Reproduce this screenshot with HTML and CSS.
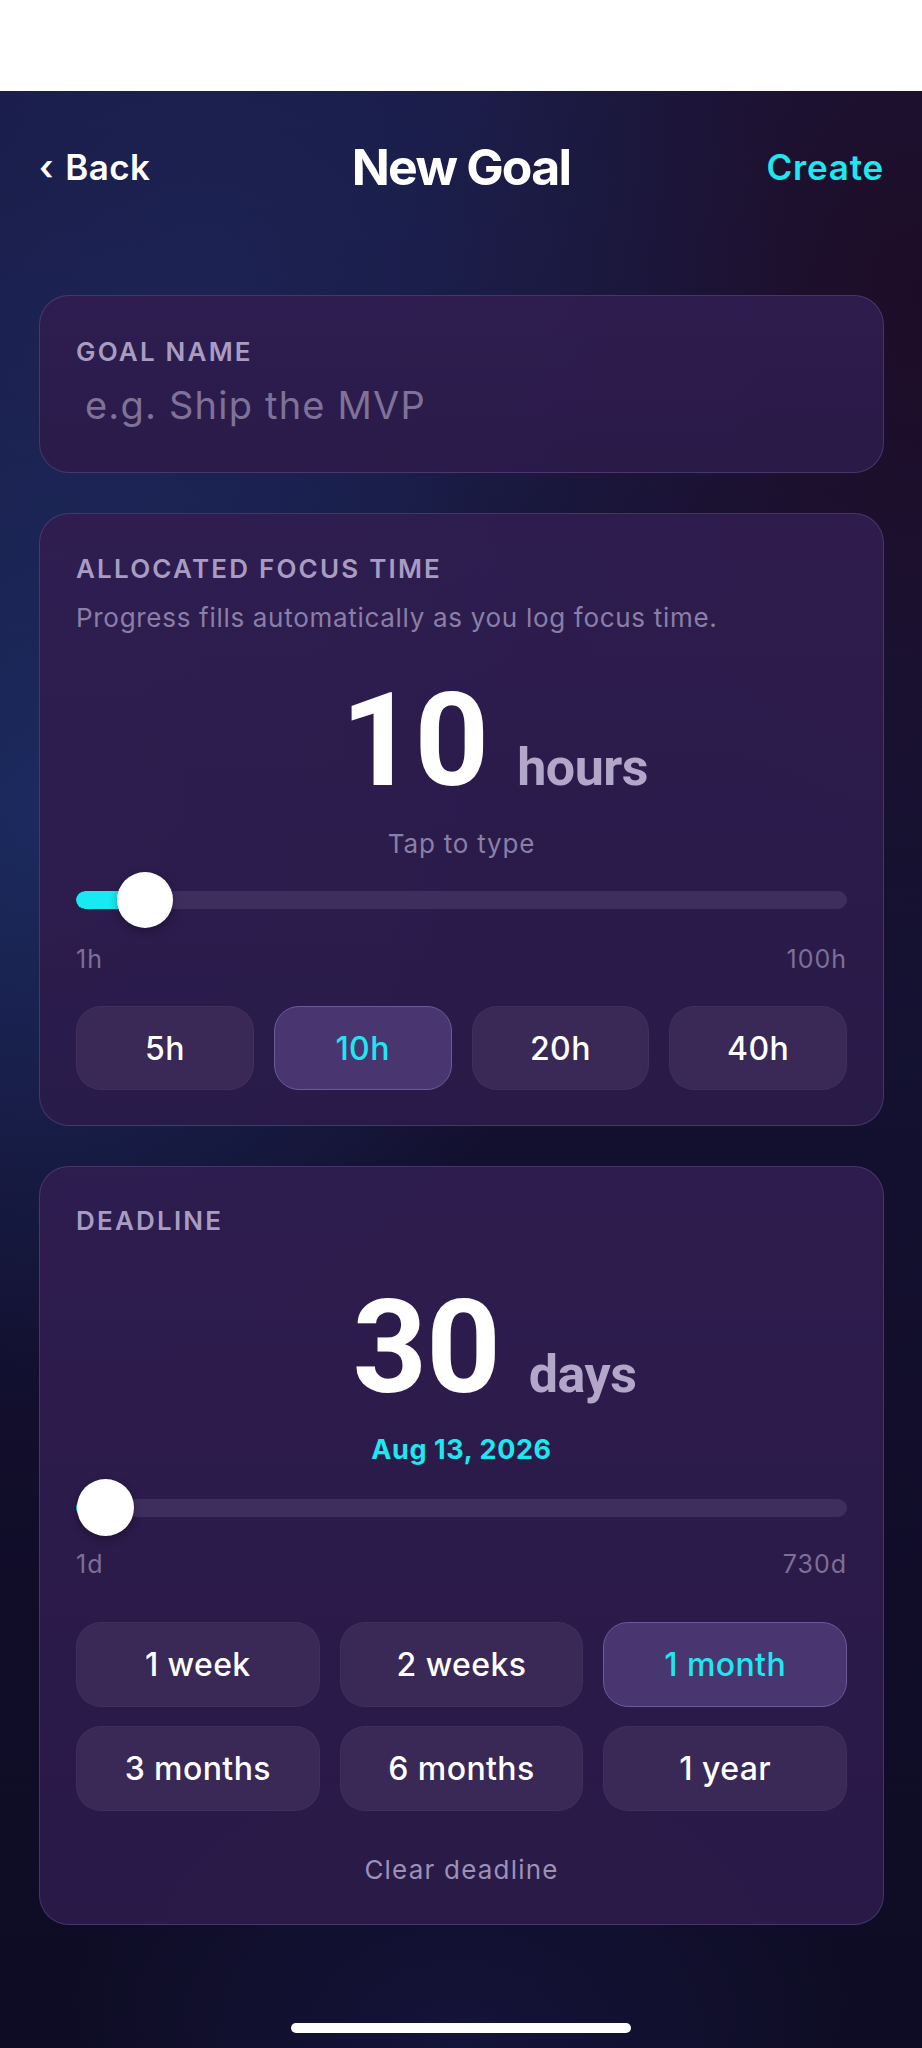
FILE: index.html
```html
<!DOCTYPE html>
<html lang="en">
<head>
<meta charset="utf-8">
<title>New Goal</title>
<link rel="stylesheet" href="styles.css">
</head>
<body>
<div class="statusbar"></div>
<div class="screen">
  <header class="nav">
    <a class="nav-back"><span class="chev">‹</span> Back</a>
    <h1 class="nav-title">New Goal</h1>
    <a class="nav-create">Create</a>
  </header>

  <main class="content">
    <section class="card card-name">
      <div class="label">GOAL NAME</div>
      <div class="placeholder">e.g. Ship the MVP</div>
    </section>

    <section class="card card-focus">
      <div class="label">ALLOCATED FOCUS TIME</div>
      <div class="desc">Progress fills automatically as you log focus time.</div>
      <div class="big big-focus"><span class="big-num">10</span><span class="big-unit">hours</span></div>
      <div class="hint">Tap to type</div>
      <div class="slider slider-focus">
        <div class="track"><div class="fill" style="width:9%"></div></div>
        <div class="thumb" style="left:9%"></div>
      </div>
      <div class="range range-focus"><span>1h</span><span>100h</span></div>
      <div class="chips chips-4">
        <div class="chip">5h</div>
        <div class="chip chip-on">10h</div>
        <div class="chip">20h</div>
        <div class="chip">40h</div>
      </div>
    </section>

    <section class="card card-deadline">
      <div class="label">DEADLINE</div>
      <div class="big big-deadline"><span class="big-num">30</span><span class="big-unit">days</span></div>
      <div class="date">Aug 13, 2026</div>
      <div class="slider slider-deadline">
        <div class="track"><div class="fill" style="width:1%"></div></div>
        <div class="thumb" style="left:3.7%"></div>
      </div>
      <div class="range range-deadline"><span>1d</span><span>730d</span></div>
      <div class="chips chips-3">
        <div class="chip">1 week</div>
        <div class="chip">2 weeks</div>
        <div class="chip chip-on">1 month</div>
        <div class="chip">3 months</div>
        <div class="chip">6 months</div>
        <div class="chip">1 year</div>
      </div>
      <div class="clear">Clear deadline</div>
    </section>
  </main>
  <div class="home-indicator"></div>
</div>
</body>
</html>
```

FILE: styles.css
```css
* { box-sizing: border-box; }
html, body { margin: 0; padding: 0; }
body {
  width: 922px;
  height: 2048px;
  overflow: hidden;
  background: #ffffff;
  font-family: Inter, "Noto Sans", sans-serif;
  color: #ffffff;
}
.statusbar { height: 91px; background: #ffffff; }
.screen {
  height: 1957px;
  position: relative;
  background:
    radial-gradient(ellipse 520px 620px at 40px 720px, rgba(30, 52, 112, 0.7), rgba(30, 52, 112, 0) 100%),
    radial-gradient(ellipse 600px 500px at 200px 180px, rgba(30, 42, 96, 0.55), rgba(30, 42, 96, 0) 100%),
    radial-gradient(ellipse 520px 760px at 920px 200px, rgba(30, 12, 38, 0.95), rgba(30, 12, 38, 0) 100%),
    radial-gradient(ellipse 400px 300px at 460px 1960px, rgba(25, 25, 72, 0.6), rgba(25, 25, 72, 0) 100%),
    linear-gradient(180deg, #1a1a44 0%, #161436 35%, #110d2a 70%, #0e0c24 100%);
}
.nav {
  height: 152px;
  padding: 0 38px 0 39px;
  display: flex;
  align-items: center;
  justify-content: space-between;
  position: relative;
}
.nav-back {
  font-size: 35px;
  font-weight: 600;
  letter-spacing: 0.4px;
  color: #ffffff;
}
.chev { font-size: 35px; font-weight: 600; margin-right: 2px; }
.nav-title {
  position: absolute;
  left: 0; right: 0; top: 0;
  margin: 0;
  height: 152px;
  line-height: 152px;
  text-align: center;
  font-size: 50px;
  font-weight: 700;
  letter-spacing: -1.8px;
  pointer-events: none;
}
.nav-create {
  font-size: 35px;
  font-weight: 600;
  color: #1ee8ef;
  letter-spacing: 0.8px;
}
.content {
  padding: 52px 38px 0 39px;
  display: flex;
  flex-direction: column;
  gap: 40px;
}
.card {
  background: linear-gradient(180deg, rgba(48, 29, 80, 0.92), rgba(43, 27, 74, 0.92));
  border: 1.5px solid rgba(170, 150, 220, 0.22);
  border-radius: 30px;
  padding: 0 36px 0 36px;
  display: flex;
  flex-direction: column;
}
.label {
  font-size: 26px;
  line-height: 32px;
  font-weight: 600;
  letter-spacing: 2.2px;
  color: #a99cc2;
}
.card-name { height: 178px; padding-top: 40px; }
.placeholder {
  margin-top: 14px;
  padding-left: 9px;
  font-size: 38px;
  line-height: 46px;
  color: #7f7299;
  letter-spacing: 1.2px;
}
.card-focus { height: 613px; padding-top: 39px; }
.desc {
  margin-top: 17px;
  font-size: 26px;
  line-height: 32px;
  color: #8a7fa6;
  letter-spacing: 0.7px;
}
.big {
  display: flex;
  justify-content: center;
  align-items: baseline;
  gap: 29px;
  line-height: 130px;
  height: 130px;
  padding-left: 66px;
}
.big-focus { margin-top: 42px; }
.big-deadline { margin-top: 46px; }
.big-num {
  font-family: Roboto, "Noto Sans", sans-serif;
  font-size: 130px;
  font-weight: 700;
  color: #ffffff;
  letter-spacing: -1px;
}
.big-unit {
  font-family: Roboto, "Noto Sans", sans-serif;
  font-size: 52px;
  font-weight: 700;
  color: #b3a7c9;
  letter-spacing: -0.5px;
}
.hint {
  margin-top: 22px;
  text-align: center;
  font-size: 26px;
  line-height: 32px;
  color: #8a7fa6;
  letter-spacing: 0.8px;
}
.slider {
  position: relative;
  height: 56px;
  display: flex;
  align-items: center;
}
.slider-focus { margin-top: 12px; }
.slider-deadline { margin-top: 12px; height: 57px; }
.track {
  width: 100%;
  height: 18px;
  border-radius: 9px;
  background: #3e2e5d;
  overflow: hidden;
}
.fill {
  height: 100%;
  background: #17eaf2;
  border-radius: 9px;
}
.thumb {
  position: absolute;
  top: 0;
  width: 56px;
  height: 56px;
  margin-left: -28px;
  border-radius: 50%;
  background: #ffffff;
  box-shadow: 0 3px 8px rgba(0, 0, 0, 0.3);
}
.slider-deadline .thumb { width: 57px; height: 57px; }
.range {
  display: flex;
  justify-content: space-between;
  font-size: 25px;
  line-height: 30px;
  color: #7c6f98;
  letter-spacing: 1px;
}
.range-focus { margin-top: 16px; }
.range-deadline { margin-top: 13px; }
.chips {
  display: grid;
  gap: 19px 20px;
}
.chips-4 { grid-template-columns: repeat(4, 1fr); margin-top: 32px; }
.chips-3 { grid-template-columns: repeat(3, 1fr); margin-top: 43px; }
.chip {
  height: 85px;
  border-radius: 25px;
  background: #3a2956;
  border: 1.5px solid rgba(255, 255, 255, 0.03);
  display: flex;
  align-items: center;
  justify-content: center;
  font-size: 32px;
  font-weight: 500;
  color: #ffffff;
  letter-spacing: 0.4px;
}
.chips-4 .chip { height: 84px; }
.chip-on {
  background: #49356f;
  border: 1.5px solid #6c5a98;
  color: #1ee8ef;
}
.card-deadline { height: 759px; padding-top: 38px; }
.date {
  margin-top: 20px;
  text-align: center;
  font-size: 27px;
  line-height: 34px;
  font-weight: 700;
  color: #1ee8ef;
  letter-spacing: 0.6px;
}
.clear {
  margin-top: 43px;
  text-align: center;
  font-size: 26px;
  line-height: 32px;
  color: #9d91b6;
  letter-spacing: 1.2px;
}
.home-indicator {
  position: absolute;
  left: 291px;
  top: 1932px;
  width: 340px;
  height: 10px;
  border-radius: 5px;
  background: #ffffff;
}
```
